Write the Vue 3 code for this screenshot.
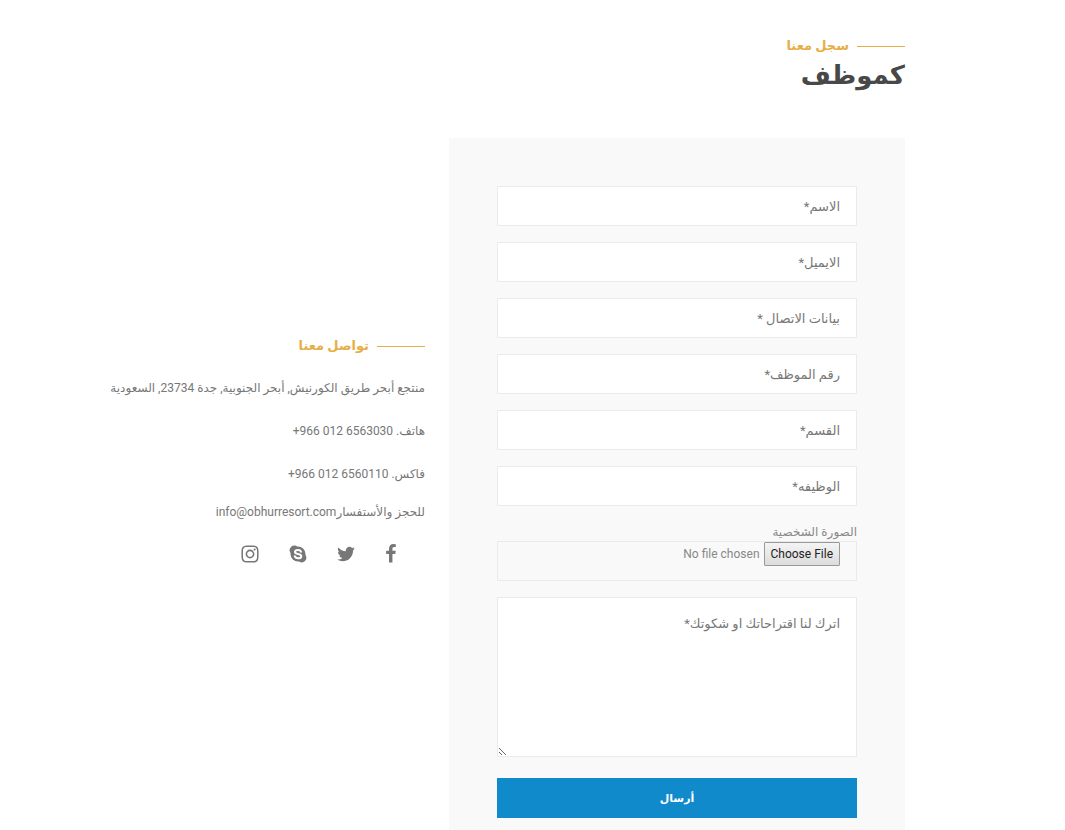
<script setup>
const fields = [
  { id: 'name', type: 'text', label: 'الاسم*' },
  { id: 'email', type: 'email', label: 'الايميل*' },
  { id: 'contact', type: 'text', label: 'بيانات الاتصال *' },
  { id: 'employee-number', type: 'text', label: 'رقم الموظف*' },
  { id: 'department', type: 'text', label: 'القسم*' },
  { id: 'job', type: 'text', label: 'الوظيفه*' },
]
</script>

<template>
  <main class="page" dir="rtl" lang="ar">
    <header class="heading">
      <p class="eyebrow">سجل معنا</p>
      <h1 class="title">كموظف</h1>
    </header>

    <div class="columns">
      <form class="form" @submit.prevent>
        <input
          v-for="field in fields"
          :id="field.id"
          :key="field.id"
          class="control"
          :type="field.type"
          :name="field.id"
          dir="rtl"
          :placeholder="field.label"
          :aria-label="field.label"
        />
        <div class="upload">
          <label class="upload-label" for="photo">الصورة الشخصية</label>
          <input id="photo" class="file" type="file" name="photo" />
        </div>
        <textarea
          id="message"
          class="control message"
          name="message"
          placeholder="اترك لنا اقتراحاتك او شكوتك*"
          aria-label="اترك لنا اقتراحاتك او شكوتك*"
        ></textarea>
        <button class="submit" type="submit">أرسال</button>
      </form>

      <section class="contact">
        <h2 class="eyebrow">تواصل معنا</h2>
        <p class="line">منتجع أبحر طريق الكورنيش, أبحر الجنوبية, جدة 23734, السعودية</p>
        <p class="line">هاتف. <bdi dir="ltr">+966 012 6563030</bdi></p>
        <p class="line">فاكس. <bdi dir="ltr">+966 012 6560110</bdi></p>
        <p class="line mail">للحجز والأستفسار<a href="mailto:info@obhurresort.com">info@obhurresort.com</a></p>
        <nav class="social">
          <a href="#" aria-label="Facebook">
            <svg width="12" height="20" viewBox="374 0 1075 1792"><path d="M1343 12v264h-157q-86 0-116 36t-30 108v189h293l-39 296h-254v759h-306v-759h-255v-296h255v-218q0-186 104-288.5t277-102.5q147 0 228 12z" /></svg>
          </a>
          <a href="#" aria-label="Twitter">
            <svg width="18" height="20" viewBox="90 0 1612 1792"><path d="M1684 408q-67 98-162 167 1 14 1 42 0 130-38 259.500t-115.500 248.500-184.500 210.500-258 146-323 54.500q-271 0-496-145 35 4 78 4 225 0 401-138-105-2-188-64.500t-114-159.500q33 5 61 5 43 0 85-11-112-23-185.500-111.500t-73.500-205.500v-4q68 38 146 41-66-44-105-115t-39-154q0-88 44-163 121 149 294.500 238.500t371.500 99.500q-8-38-8-74 0-134 94.500-228.500t228.500-94.500q140 0 236 102 109-21 205-78-37 115-142 178 93-10 186-50z" /></svg>
          </a>
          <a href="#" aria-label="Skype">
            <svg width="18" height="20" viewBox="0 0 18 20">
              <circle cx="9" cy="10" r="7.500" />
              <circle cx="5.300" cy="6.300" r="4.700" />
              <circle cx="12.700" cy="13.700" r="4.700" />
              <path class="letter" d="M12 7.700C11.600 6.500 10.500 5.900 9 5.900C7.100 5.900 6 6.700 6 7.900C6 9.200 7.200 9.600 9 10C11 10.400 12.300 10.800 12.300 12.200C12.300 13.500 11 14.300 9.200 14.300C7.300 14.300 6.200 13.500 5.700 12.200" />
            </svg>
          </a>
          <a href="#" aria-label="Instagram">
            <svg width="18" height="20" viewBox="90 0 1612 1792"><path d="M1152 896q0-106-75-181t-181-75-181 75-75 181 75 181 181 75 181-75 75-181zm138 0q0 164-115 279t-279 115-279-115-115-279 115-279 279-115 279 115 115 279zm108-410q0 38-27 65t-65 27-65-27-27-65 27-65 65-27 65 27 27 65zm-502-220q-7 0-76.500-.5t-105.500 0-96.500 3-103 10-71.500 18.500q-50 20-88 58t-58 88q-11 29-18.500 71.500t-10 103-3 96.500 0 105.500.5 76.500-.5 76.500 0 105.500 3 96.500 10 103 18.500 71.500q20 50 58 88t88 58q29 11 71.500 18.500t103 10 96.500 3 105.500 0 76.500-.5 76.500.5 105.500 0 96.500-3 103-10 71.500-18.500q50-20 88-58t58-88q11-29 18.500-71.500t10-103 3-96.500 0-105.500-.5-76.500.5-76.500 0-105.500-3-96.500-10-103-18.500-71.500q-20-50-58-88t-88-58q-29-11-71.500-18.500t-103-10-96.500-3-105.500 0-76.500.5zm768 630q0 229-5 317-10 208-124 322t-322 124q-88 5-317 5t-317-5q-208-10-322-124t-124-322q-5-88-5-317t5-317q10-208 124-322t322-124q88-5 317-5t317 5q208 10 322 124t124 322q5 88 5 317z" /></svg>
          </a>
        </nav>
      </section>
    </div>
  </main>
</template>

<style>
body {
  background: #fff;
}
</style>

<style scoped>
.page,
.page * {
  box-sizing: border-box;
}

.page {
  padding-top: 36px;
  padding-inline: 160px 56px;
  font-family: Roboto, "DejaVu Sans", sans-serif;
  font-size: 12px;
  color: #777;
}

.heading {
  margin-bottom: 44px;
}

.eyebrow {
  display: flex;
  align-items: center;
  gap: 8px;
  margin: 0;
  font-size: 13px;
  line-height: 20px;
  font-weight: 700;
  color: #e8ae46;
}

.eyebrow::before {
  content: "";
  width: 48px;
  height: 1px;
  background: #e8ae46;
}

.title {
  margin: 0;
  font-size: 26px;
  line-height: 38px;
  font-weight: 700;
  color: #484848;
}

.columns {
  display: grid;
  grid-template-columns: 456fr 369fr;
  gap: 24px;
}

.form {
  display: flex;
  flex-direction: column;
  gap: 16px;
  padding: 48px 48px 12px;
  background: #f9f9f9;
}

.control {
  display: block;
  width: 100%;
  height: 40px;
  margin: 0;
  padding: 0 16px;
  border: 1px solid #ebebeb;
  border-radius: 0;
  background: #fff;
  font: inherit;
  font-size: 13px;
  text-align: right;
  color: #777;
  outline: 0;
}

.control::placeholder {
  color: #777;
  opacity: 1;
}

.upload-label {
  display: block;
  height: 19px;
  line-height: 20px;
  color: #888;
}

.file {
  display: block;
  width: 100%;
  height: 40px;
  padding: 0 16px;
  border: 1px solid #ebebeb;
  font-family: Roboto, sans-serif;
  font-size: 12px;
  color: #888;
}

.file::file-selector-button {
  height: 24px;
  margin: 0;
  margin-inline-end: 4px;
  padding: 0 6px;
  border: 1px solid #999;
  border-radius: 1px;
  background: linear-gradient(#f4f4f4, #dcdcdc);
  font: inherit;
  color: #222;
}

.message {
  height: 160px;
  padding-block: 16px;
  line-height: 20px;
  resize: vertical;
}

.submit {
  height: 40px;
  margin-top: 5px;
  border: 0;
  background: #118acb;
  font: inherit;
  font-size: 11px;
  font-weight: 700;
  color: #fff;
}

.contact {
  padding-top: 198px;
}

.contact .eyebrow {
  margin-bottom: 20px;
}

.line {
  margin: 0 0 19px;
  line-height: 24px;
  white-space: nowrap;
}

.mail {
  margin: -5px 0 20px;
}

.line a {
  color: inherit;
  text-decoration: none;
}

.social {
  display: flex;
  gap: 30px;
  padding-inline-start: 28px;
}

.social svg {
  display: block;
  fill: #777;
}

.social .letter {
  fill: none;
  stroke: #fff;
  stroke-width: 2;
  stroke-linecap: round;
}
</style>
